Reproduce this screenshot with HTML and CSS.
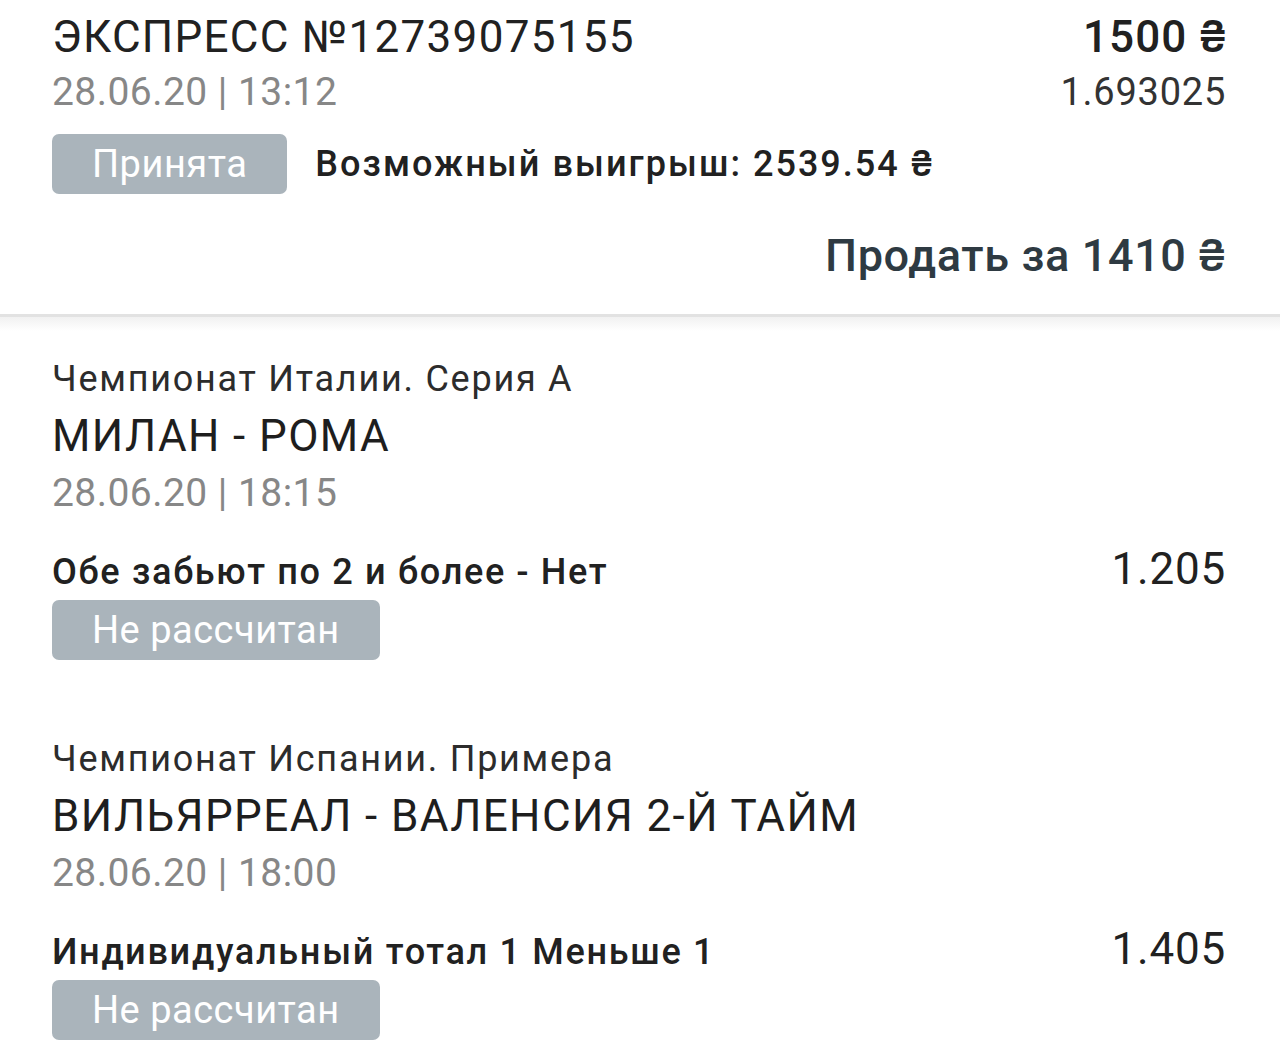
FILE: index.html
```html
<!DOCTYPE html>
<html lang="ru">
<head>
<meta charset="utf-8">
<link rel="stylesheet" href="styles.css">
</head>
<body>
<div class="page">
  <section class="header">
    <div class="row">
      <div class="title">ЭКСПРЕСС №12739075155</div>
      <div class="stake">1500 ₴</div>
    </div>
    <div class="row">
      <div class="date">28.06.20 | 13:12</div>
      <div class="coef">1.693025</div>
    </div>
    <div class="status-row">
      <span class="badge badge-accepted">Принята</span>
      <span class="win">Возможный выигрыш: 2539.54 ₴</span>
    </div>
    <div class="sell-row">
      <span class="sell">Продать за 1410 ₴</span>
    </div>
  </section>
  <div class="divider"></div>
  <section class="event">
    <div class="league">Чемпионат Италии. Серия А</div>
    <div class="match">МИЛАН - РОМА</div>
    <div class="date">28.06.20 | 18:15</div>
    <div class="bet-row">
      <span class="bet">Обе забьют по 2 и более - Нет</span>
      <span class="odd">1.205</span>
    </div>
    <span class="badge">Не рассчитан</span>
  </section>
  <section class="event">
    <div class="league">Чемпионат Испании. Примера</div>
    <div class="match">ВИЛЬЯРРЕАЛ - ВАЛЕНСИЯ 2-Й ТАЙМ</div>
    <div class="date">28.06.20 | 18:00</div>
    <div class="bet-row">
      <span class="bet">Индивидуальный тотал 1 Меньше 1</span>
      <span class="odd">1.405</span>
    </div>
    <span class="badge">Не рассчитан</span>
  </section>
</div>
</body>
</html>
```
FILE: styles.css
```css
html, body {
  margin: 0;
  padding: 0;
  background: #ffffff;
}
body {
  font-family: Roboto, "Noto Sans", sans-serif;
  color: #212121;
  overflow: hidden;
  height: 1064px;
}
.page {
  width: 1280px;
}
.header {
  padding: 10px 54px 0 52px;
  height: 314px;
  box-sizing: border-box;
}
.row {
  display: flex;
  justify-content: space-between;
  align-items: baseline;
}
.title {
  font-size: 44px;
  line-height: 54px;
  letter-spacing: 1.3px;
  color: #212121;
}
.stake,
.win,
.sell,
.bet {
  font-family: "Roboto Medium", Roboto, "Noto Sans", sans-serif;
  font-weight: 500;
}
.stake {
  font-size: 44px;
  line-height: 54px;
  letter-spacing: 1.1px;
  margin-right: -1px;
}
.date {
  font-size: 39px;
  line-height: 56px;
  letter-spacing: 0.45px;
  color: #878787;
}
.coef {
  font-size: 38px;
  line-height: 56px;
  letter-spacing: 0.75px;
  color: #333;
}
.status-row {
  display: flex;
  align-items: center;
  gap: 28px;
  margin-top: 14px;
}
.badge {
  display: inline-block;
  background: #aab4bb;
  color: #ffffff;
  border-radius: 7px;
  font-size: 38px;
  letter-spacing: 0.5px;
  line-height: 60px;
  height: 60px;
  padding: 0 40px;
}
.win {
  font-size: 36px;
  letter-spacing: 2px;
}
.sell-row {
  display: flex;
  justify-content: flex-end;
  margin-top: 35px;
}
.sell {
  font-size: 45px;
  letter-spacing: 0.6px;
  color: #2e3a42;
}
.divider {
  height: 14px;
  border-top: 3px solid #e2e2e2;
  background: linear-gradient(#f1f1f1, #ffffff);
}
.event {
  padding: 20px 54px 0 52px;
  height: 380px;
  box-sizing: border-box;
}
.event + .event {
  height: auto;
}
.league {
  font-size: 36px;
  line-height: 56px;
  letter-spacing: 1.75px;
  color: #2c2c2c;
}
.match {
  font-size: 44px;
  line-height: 58px;
  letter-spacing: 1.4px;
  color: #1e1e1e;
}
.bet-row {
  display: flex;
  justify-content: space-between;
  align-items: baseline;
  margin-top: 20px;
}
.bet {
  font-size: 36px;
  letter-spacing: 1.65px;
  line-height: 56px;
}
.odd {
  font-size: 44px;
  line-height: 56px;
  letter-spacing: 0.8px;
  color: #212121;
}
```
